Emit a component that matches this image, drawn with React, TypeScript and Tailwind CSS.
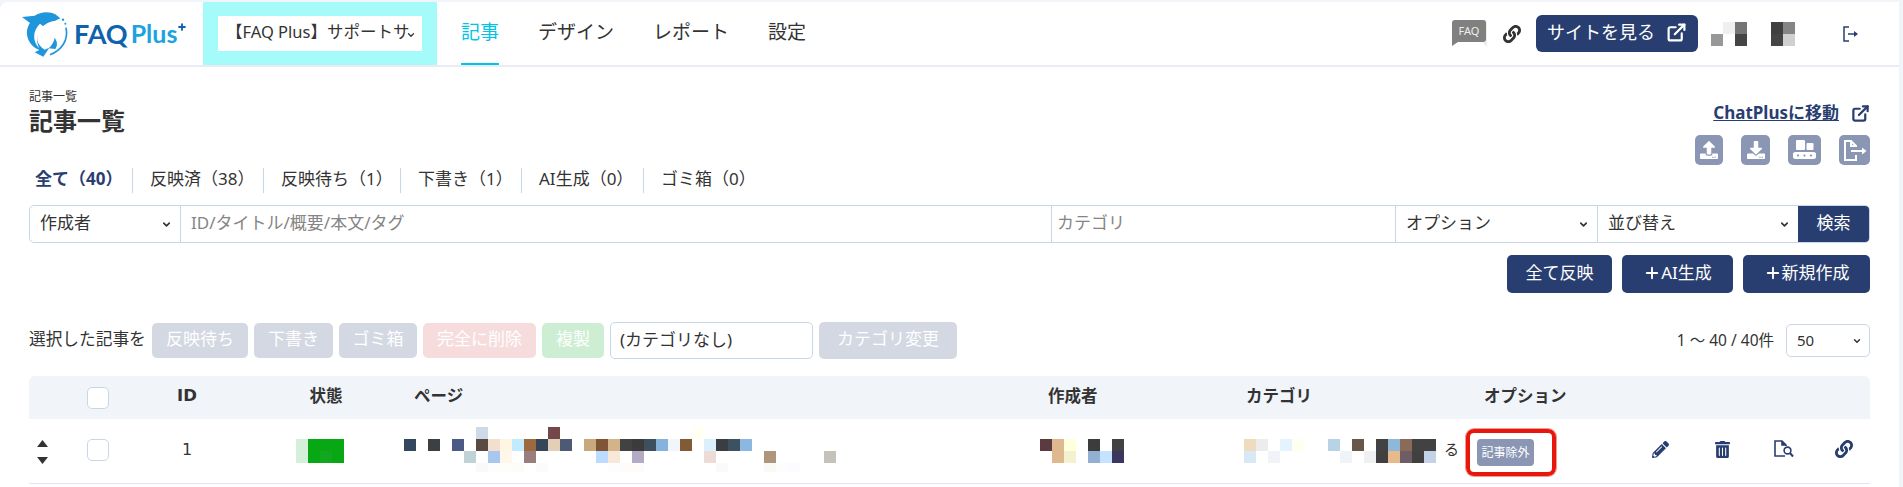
import { ChevronDown, ExternalLink, Plus } from "lucide-react";
import { FaDownload, FaLink, FaPencilAlt, FaTrashAlt, FaUpload } from "react-icons/fa";

type Cell = [number, number, string];

const titleCells: Cell[] = [
  [6, 0, "#cddbe9"], [12, 0, "#74484a"], [24, 0, "#fffff2"],
  [0, 1, "#33475f"], [2, 1, "#3c4043"], [4, 1, "#4c5b85"], [6, 1, "#5a4a42"], [7, 1, "#f2e0cd"],
  [8, 1, "#fff5e3"], [9, 1, "#c2ebff"], [10, 1, "#9c6a3e"], [11, 1, "#374559"], [12, 1, "#e2cfb7"],
  [13, 1, "#4c5a74"], [15, 1, "#c9a87e"], [16, 1, "#805535"], [17, 1, "#d3b48a"], [18, 1, "#424243"],
  [19, 1, "#3d3b3a"], [20, 1, "#3c505f"], [21, 1, "#85b3de"], [22, 1, "#f2f6fb"], [23, 1, "#815b36"],
  [25, 1, "#daf0fb"], [26, 1, "#3a3d42"], [27, 1, "#3d5261"], [28, 1, "#8bb7e0"],
  [5, 2, "#bfd3d6"], [7, 2, "#a8c7ee"], [8, 2, "#fff7ea"], [10, 2, "#9a7d7e"], [16, 2, "#bcdcff"],
  [17, 2, "#f7e8da"], [19, 2, "#b3abc6"], [25, 2, "#eddcd5"], [30, 2, "#ae957c"], [35, 2, "#c5c1bb"],
  [6, 3, "#f9f9f9"], [7, 3, "#fdfdfb"], [8, 3, "#fdfdfb"], [9, 3, "#fdfcf9"], [11, 3, "#fbfbfb"],
  [17, 3, "#fcfdff"], [18, 3, "#fefcfa"], [19, 3, "#fefcfa"], [26, 3, "#fcfaf8"], [30, 3, "#fbf9f6"],
  [31, 3, "#fdfdfd"], [32, 3, "#fbfcff"],
];

const authorCells: Cell[] = [
  [0, 0, "#5c3b40"], [1, 0, "#e0b88f"], [2, 0, "#ffffdc"], [4, 0, "#3c3c3c"], [6, 0, "#424242"],
  [1, 1, "#e0b88f"], [2, 1, "#f3f1d0"], [4, 1, "#93b0d0"], [5, 1, "#c5e2ff"], [6, 1, "#3a3660"],
];

const categoryCells: Cell[] = [
  [0, 0, "#efdcbe"], [1, 0, "#ececec"], [3, 0, "#e3f4fe"], [4, 0, "#fffff0"], [7, 0, "#b8d2e6"],
  [9, 0, "#67584a"], [11, 0, "#424242"], [12, 0, "#8eb8da"], [13, 0, "#8a6b5a"], [14, 0, "#424242"],
  [15, 0, "#424242"],
  [0, 1, "#d8e9f5"], [2, 1, "#f2f3f8"], [8, 1, "#f0f3f7"], [10, 1, "#f0f0f2"], [11, 1, "#404040"],
  [12, 1, "#e8b98a"], [13, 1, "#6f5d66"], [14, 1, "#404040"], [15, 1, "#c3d2e6"],
];

const statusCells: Cell[] = [
  [0, 0, "#d5f0da"], [1, 0, "#08a814"], [2, 0, "#08a814"], [3, 0, "#08a814"],
  [0, 1, "#d5f0da"], [1, 1, "#08a814"], [2, 1, "#12a71e"], [3, 1, "#08a814"],
];

const userCells: Cell[] = [
  [1, 0, "#efefef"], [2, 0, "#757575"], [0, 1, "#989898"], [2, 1, "#454545"],
];

const roleCells: Cell[] = [
  [0, 0, "#404040"], [1, 0, "#858585"], [0, 1, "#454545"], [1, 1, "#d0d0d0"],
];

const tabs = [
  { label: "反映済（38）", cls: "w-[131px]" },
  { label: "反映待ち（1）", cls: "w-[137px]" },
  { label: "下書き（1）", cls: "w-[121px]" },
  { label: "AI生成（0）", cls: "w-[122px]" },
  { label: "ゴミ箱（0）", cls: "w-[122px]" },
];

const bulkButtons = [
  { label: "反映待ち", cls: "w-[96px] bg-[#d3d8e3]" },
  { label: "下書き", cls: "w-[79px] bg-[#d3d8e3]" },
  { label: "ゴミ箱", cls: "w-[78px] bg-[#d3d8e3]" },
  { label: "完全に削除", cls: "w-[113px] bg-[#f6dcdd]" },
  { label: "複製", cls: "w-[62px] bg-[#cdeed2]" },
];

function Mosaic({ cells, cols, rows, height }: { cells: Cell[]; cols: number; rows: number; height?: number }) {
  const h = height ?? rows * 12;
  return (
    <svg width={cols * 12} height={h} viewBox={`0 0 ${cols * 12} ${h}`} shapeRendering="crispEdges" className="shrink-0">
      {cells.map(([x, y, color]) => (
        <rect key={`${x}-${y}`} x={x * 12} y={y * 12} width={12} height={12} fill={color} />
      ))}
    </svg>
  );
}

function Logo() {
  return (
    <div className="flex items-center">
      <svg width="50" height="50" viewBox="60 30 150 150" className="shrink-0">
        <path
          d="M66 54 L104 50 C120 38 150 36 166 46 L181 58 L164 66 C146 68 128 78 118 94 C106 114 110 138 134 152 L148 146 L130 173 L104 160 L118 153 C84 140 70 100 90 72 Z"
          fill="#1f96dc"
        />
        <path d="M120 74 C98 94 96 126 118 148 C106 124 110 100 132 84 Z" fill="#ffffff" />
        <path d="M198 86 C206 122 186 154 150 167" fill="none" stroke="#1f96dc" strokeWidth="5" />
        <path d="M146 148 C156 138 162 128 164 116 C172 128 174 138 166 150 Z" fill="#1f96dc" />
        <circle cx="189" cy="62" r="3.5" fill="#1f96dc" />
        <circle cx="196" cy="74" r="3" fill="#1f96dc" />
      </svg>
      <span className="ml-[4px] font-['Lato',sans-serif] text-[27px] font-bold leading-none text-[#0f62ac]">FAQ</span>
      <span className="ml-[3px] font-['Lato',sans-serif] text-[25px] font-bold leading-none text-[#1ca3e0]">Plus</span>
      <Plus size={10} strokeWidth={4.5} className="mb-[14px] text-[#0f62ac]" />
    </div>
  );
}

function FaqBubble() {
  return (
    <svg width="35" height="27" viewBox="0 0 35 27" className="shrink-0">
      <path d="M3 0 H32 Q35 0 35 3 V27 L30 22 H0 V3 Q0 0 3 0 Z" fill="#efeee8" />
      <path d="M3 0 H31 Q34 0 34 3 V19 Q34 22 31 22 H6 L0 26 V3 Q0 0 3 0 Z" fill="#808080" />
      <text x="17" y="15" textAnchor="middle" fontSize="11" fill="#eeeeee" fontFamily="Noto Sans, sans-serif">
        FAQ
      </text>
    </svg>
  );
}

function ConveyorIcon() {
  return (
    <svg width="23" height="20" viewBox="0 0 23 20" fill="#ffffff">
      <rect x="3" y="0" width="9" height="10" rx="1" />
      <rect x="13.5" y="3" width="7" height="7" rx="1" />
      <path
        fillRule="evenodd"
        d="M3 12 H20 A3.5 3.5 0 0 1 20 19 H3 A3.5 3.5 0 0 1 3 12 Z M5 14.5 a1 1 0 1 0 0.01 0 Z M11.5 14.5 a1 1 0 1 0 0.01 0 Z M18 14.5 a1 1 0 1 0 0.01 0 Z"
      />
    </svg>
  );
}

function ExportIcon() {
  return (
    <svg width="24" height="21" viewBox="0 0 24 21" fill="none" stroke="#ffffff" strokeWidth="2">
      <path d="M13 7 V6 L8 1 H2 V20 H13 V15" />
      <path d="M8 1 V6 H13" />
      <path d="M8 11 H20" />
      <path d="M19 7.5 L23.5 11 L19 14.5 Z" fill="#ffffff" stroke="none" />
    </svg>
  );
}

function DocSearchIcon() {
  return (
    <svg width="20" height="18" viewBox="0 0 20 18" fill="none" stroke="#283e70" strokeWidth="1.6">
      <path d="M12 6 V5 L8 1 H1 V16 H11" />
      <path d="M8 1 V5 H12" fill="#283e70" />
      <circle cx="13.5" cy="10.5" r="3.4" />
      <path d="M16 13 L19 16.5" strokeWidth="2" />
    </svg>
  );
}

function LogoutIcon() {
  return (
    <svg width="15" height="16" viewBox="0 0 15 16" fill="none" stroke="#283e70" strokeWidth="1.5" className="shrink-0">
      <path d="M6 1 H1 V15 H6" />
      <path d="M5 8 H12" />
      <path d="M11 5 L15 8 L11 11 Z" fill="#283e70" stroke="none" />
    </svg>
  );
}

function SortCaret({ down }: { down?: boolean }) {
  return (
    <svg width="11" height="7" viewBox="0 0 11 7" fill="#333333">
      <path d={down ? "M0 0 H11 L5.5 7 Z" : "M5.5 0 L11 7 H0 Z"} />
    </svg>
  );
}

function SelectCell({ label, cls }: { label: string; cls: string }) {
  return (
    <div className={`flex h-full shrink-0 items-center justify-between border-r border-[#c9d6ea] ${cls}`}>
      <span className="pb-[3px] text-[17px] text-[#333333]">{label}</span>
      <ChevronDown size={11} strokeWidth={3.5} className="text-[#333333]" />
    </div>
  );
}

function NavyButton({ children, cls }: { children: React.ReactNode; cls: string }) {
  return (
    <button type="button" className={`flex h-[38px] items-center justify-center rounded-[5px] bg-[#283e70] pb-[3px] text-[17px] text-white ${cls}`}>
      {children}
    </button>
  );
}

function Checkbox() {
  return <span className="block h-[22px] w-[22px] rounded-[5px] border border-[#c9d6ea] bg-white" />;
}

function IconTile({ children, cls }: { children: React.ReactNode; cls: string }) {
  return <span className={`flex h-[30px] items-center justify-center rounded-[5px] bg-[#8a96b4] text-white ${cls}`}>{children}</span>;
}

export default function App() {
  return (
    <div className="h-[487px] overflow-hidden bg-[#f1f4f9] pr-[4px] pt-[2px] font-['Noto_Sans','Noto_Sans_CJK_JP',sans-serif] text-[#333333]">
      <div className="h-full rounded-tl-lg bg-white">
        <header className="flex h-[65px] items-stretch border-b-2 border-[#e9ecf3]">
          <div className="flex w-[203px] shrink-0 items-center pl-[20px]">
            <Logo />
          </div>
          <div className="flex w-[234px] shrink-0 items-center justify-center bg-[#a5fbf9]">
            <div className="relative flex h-[35px] w-[204px] items-center overflow-hidden whitespace-nowrap bg-white pb-[2px] pl-[8px] text-[16.5px]">
              【FAQ Plus】サポートサ
              <ChevronDown size={10} strokeWidth={3} className="absolute right-[6px] top-[14px] text-[#333333]" />
            </div>
          </div>
          <nav className="ml-[24px] flex gap-[39px] pb-[2px] text-[19px]">
            <span className="relative flex items-center text-[#00c3e8]">
              記事
              <span className="absolute -bottom-[2px] left-0 h-[2px] w-full bg-[#00c3e8]" />
            </span>
            <span className="flex items-center">デザイン</span>
            <span className="flex items-center">レポート</span>
            <span className="flex items-center">設定</span>
          </nav>
          <div className="ml-auto flex items-center pr-[41px]">
            <FaqBubble />
            <FaLink size={18} className="ml-[16px] text-[#333333]" />
            <button type="button" className="ml-[15px] flex h-[37px] w-[162px] items-center justify-center gap-[11px] rounded-[6px] bg-[#283e70] pb-[2px] text-[18px] text-white">
              サイトを見る
              <ExternalLink size={21} strokeWidth={2.5} />
            </button>
            <span className="ml-[13px]">
              <Mosaic cells={userCells} cols={3} rows={2} />
            </span>
            <span className="ml-[24px]">
              <Mosaic cells={roleCells} cols={2} rows={2} />
            </span>
            <span className="ml-[48px]">
              <LogoutIcon />
            </span>
          </div>
        </header>

        <main className="pl-[29px] pr-[29px]">
          <div className="flex h-[101px] justify-between">
            <div className="pt-[22px]">
              <p className="text-[12px] leading-[16px]">記事一覧</p>
              <h1 className="mt-[2px] text-[24px] font-bold leading-[28px]">記事一覧</h1>
            </div>
            <div className="flex flex-col items-end pt-[34px]">
              <a className="flex h-[24px] items-center text-[17px] font-bold text-[#283e70]">
                <span className="underline">ChatPlusに移動</span>
                <ExternalLink size={19} strokeWidth={2.8} className="ml-[12px]" />
              </a>
              <div className="mt-[10px] flex gap-[18px]">
                <IconTile cls="w-[28px]"><FaUpload size={18} /></IconTile>
                <IconTile cls="w-[29px]"><FaDownload size={18} /></IconTile>
                <IconTile cls="w-[33px]"><ConveyorIcon /></IconTile>
                <IconTile cls="w-[31px]"><ExportIcon /></IconTile>
              </div>
            </div>
          </div>

          <div className="flex h-[25px] items-center whitespace-nowrap text-[17px]">
            <span className="w-[103px] shrink-0 pb-[3px] pl-[6px] font-bold text-[#283e70]">全て（40）</span>
            {tabs.map((tab) => (
              <span key={tab.label} className={`flex h-full shrink-0 items-center border-l border-[#c9d6ea] pb-[3px] pl-[17px] ${tab.cls}`}>
                {tab.label}
              </span>
            ))}
          </div>

          <div className="mt-[12px] flex h-[38px] overflow-hidden rounded-[5px] border border-[#c9d6ea]">
            <SelectCell label="作成者" cls="w-[151px] pl-[10px] pr-[8px]" />
            <input
              placeholder="ID/タイトル/概要/本文/タグ"
              className="w-[871px] border-r border-[#c9d6ea] pb-[3px] pl-[10px] text-[17px] placeholder:text-[#858585]"
            />
            <input placeholder="カテゴリ" className="w-[344px] border-r border-[#c9d6ea] pb-[3px] pl-[5px] text-[17px] placeholder:text-[#858585]" />
            <SelectCell label="オプション" cls="w-[202px] pl-[10px] pr-[8px]" />
            <div className="flex h-full w-[200px] shrink-0 items-center justify-between pl-[10px] pr-[8px]">
              <span className="pb-[3px] text-[17px]">並び替え</span>
              <ChevronDown size={11} strokeWidth={3.5} />
            </div>
            <button type="button" className="-my-px flex-1 bg-[#283e70] pb-[3px] text-[17px] text-white">
              検索
            </button>
          </div>

          <div className="mt-[12px] flex justify-end gap-[10px]">
            <NavyButton cls="w-[105px]">全て反映</NavyButton>
            <NavyButton cls="w-[111px]">
              <Plus size={18} strokeWidth={2.5} />
              AI生成
            </NavyButton>
            <NavyButton cls="w-[127px]">
              <Plus size={18} strokeWidth={2.5} />
              新規作成
            </NavyButton>
          </div>

          <div className="mt-[29px] flex h-[37px] items-center justify-between">
            <div className="flex items-center">
              <span className="mr-[6px] w-[117px] whitespace-nowrap pb-[4px] text-[16.7px]">選択した記事を</span>
              <div className="flex gap-[6px]">
                {bulkButtons.map((button) => (
                  <span key={button.label} className={`flex h-[35px] items-center justify-center rounded-[5px] pb-[3px] text-[17px] text-white ${button.cls}`}>
                    {button.label}
                  </span>
                ))}
              </div>
              <span className="ml-[6px] flex h-[37px] w-[203px] items-center rounded-[5px] border border-[#c9d6ea] pb-[2px] pl-[9px] text-[17px]">
                (カテゴリなし)
              </span>
              <span className="ml-[6px] flex h-[37px] w-[138px] items-center justify-center rounded-[5px] bg-[#d3d8e3] pb-[3px] text-[17px] text-white">
                カテゴリ変更
              </span>
            </div>
            <div className="flex items-center gap-[12px]">
              <span className="text-[15.5px]">1 ～ 40 / 40件</span>
              <span className="flex h-[33px] w-[84px] items-center justify-between rounded-[5px] border border-[#c9d6ea] pl-[10px] pr-[7px] text-[15px]">
                50
                <ChevronDown size={10} strokeWidth={3.5} />
              </span>
            </div>
          </div>

          <div className="mt-[17px] grid grid-cols-[58px_22px_156px_122px_653px_204px_222px_164px_240px] grid-rows-[43px_65px]">
            <div className="contents text-[16.5px] font-bold">
              <div className="rounded-tl-[6px] bg-[#f1f4f9]" />
              <div className="flex items-center bg-[#f1f4f9]"><Checkbox /></div>
              <div className="flex items-center justify-center bg-[#f1f4f9] pb-[2px] font-['DejaVu_Sans',sans-serif]">ID</div>
              <div className="flex items-center justify-center bg-[#f1f4f9] pb-[3px]">状態</div>
              <div className="flex items-center bg-[#f1f4f9] pb-[3px] pl-[27px]">ページ</div>
              <div className="flex items-center bg-[#f1f4f9] pb-[3px] pl-[8px]">作成者</div>
              <div className="flex items-center bg-[#f1f4f9] pb-[3px] pl-[2px]">カテゴリ</div>
              <div className="flex items-center bg-[#f1f4f9] pb-[3px] pl-[18px]">オプション</div>
              <div className="rounded-tr-[6px] bg-[#f1f4f9]" />
            </div>

            <div className="contents">
              <div className="flex flex-col items-start gap-[10px] border-b border-[#dfe6f3] pl-[8px] pt-[21px]">
                <SortCaret />
                <SortCaret down />
              </div>
              <div className="flex items-center border-b border-[#dfe6f3] pb-[2px]"><Checkbox /></div>
              <div className="flex items-center justify-center border-b border-[#dfe6f3] pb-[2px] font-['DejaVu_Sans',sans-serif] text-[16px]">1</div>
              <div className="border-b border-[#dfe6f3] pl-[31px] pt-[20px]">
                <Mosaic cells={statusCells} cols={4} rows={2} />
              </div>
              <div className="border-b border-[#dfe6f3] pl-[17px] pt-[8px]">
                <Mosaic cells={titleCells} cols={36} rows={4} height={45} />
              </div>
              <div className="border-b border-[#dfe6f3] pt-[20px]">
                <Mosaic cells={authorCells} cols={7} rows={2} />
              </div>
              <div className="flex items-start border-b border-[#dfe6f3] pt-[20px]">
                <Mosaic cells={categoryCells} cols={16} rows={2} />
                <span className="ml-[8px] text-[15px] leading-[20px]">る</span>
              </div>
              <div className="border-b border-[#dfe6f3] pt-[10px]">
                <div className="flex h-[47px] w-[90px] items-center rounded-[8px] border-4 border-[#e8170c] pl-[7px] ring-1 ring-[#f39a95]">
                  <span className="flex h-[27px] w-[57px] items-center justify-center rounded-[4px] bg-[#8a96b4] text-[12px] text-white">
                    記事除外
                  </span>
                </div>
              </div>
              <div className="flex items-center border-b border-[#dfe6f3] pb-[4px] pl-[22px] text-[#283e70]">
                <span className="w-[62px]"><FaPencilAlt size={17} /></span>
                <span className="w-[60px]"><FaTrashAlt size={17} /></span>
                <span className="w-[61px]"><DocSearchIcon /></span>
                <span><FaLink size={18} /></span>
              </div>
            </div>
          </div>
        </main>
      </div>
    </div>
  );
}
